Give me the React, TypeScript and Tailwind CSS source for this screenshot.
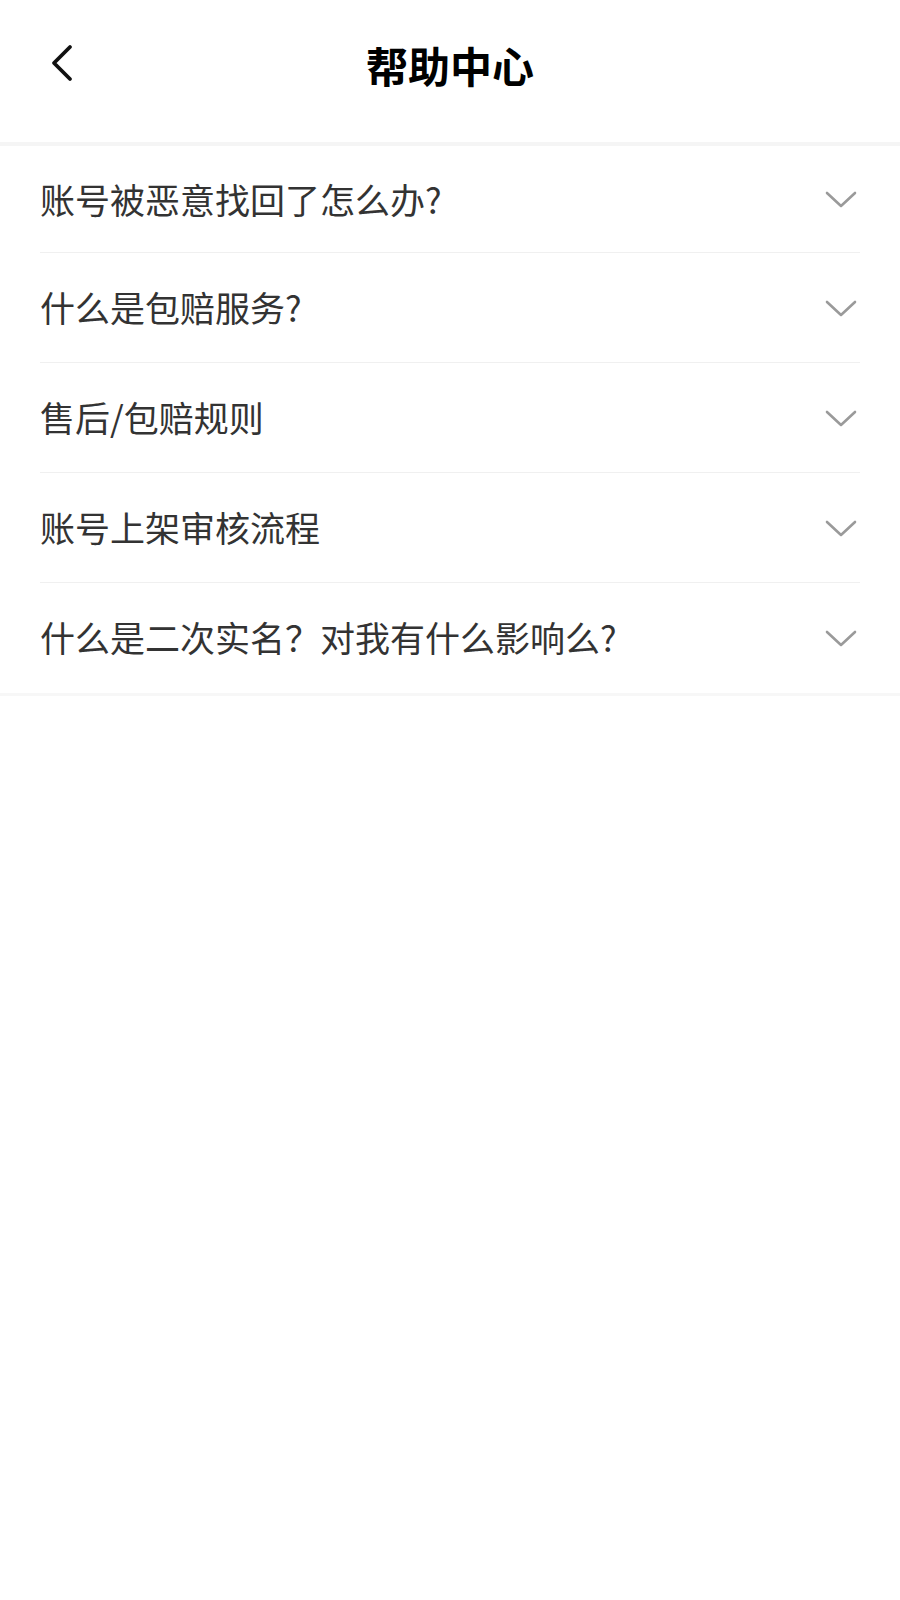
import React from 'react';

const questions = [
  '账号被恶意找回了怎么办?',
  '什么是包赔服务?',
  '售后/包赔规则',
  '账号上架审核流程',
  '什么是二次实名？对我有什么影响么?',
];

const ChevronDown: React.FC = () => (
  <svg width="32" height="18" viewBox="0 0 32 18" fill="none">
    <path d="M2 2 L16 15 L30 2" stroke="#9a9a9a" strokeWidth="2.6" strokeLinecap="round" strokeLinejoin="round" />
  </svg>
);

const App: React.FC = () => {
  return (
    <div
      className="min-h-screen w-full bg-white"
      style={{ fontFamily: '"Noto Sans CJK SC", "Noto Sans", sans-serif' }}
    >
      {/* Header */}
      <div className="relative flex h-[142px] items-center justify-center pb-[13px]">
        <button className="absolute left-[48px] top-[44px] p-0">
          <svg width="28" height="38" viewBox="0 0 28 38" fill="none">
            <path d="M22 3 L6 19 L22 35" stroke="#111" strokeWidth="3.8" strokeLinecap="round" strokeLinejoin="round" />
          </svg>
        </button>
        <h1 className="text-[42px] font-bold leading-none text-black">帮助中心</h1>
      </div>
      <div className="h-[4px] bg-[#f5f5f5]" />

      {/* Question list */}
      <div className="px-10">
        {questions.map((q, i) => (
          <div
            key={i}
            className={`flex items-center justify-between border-b ${i === 0 ? 'h-[107px]' : 'h-[110px]'} ${
              i === questions.length - 1 ? 'border-transparent' : 'border-[#f0f0f0]'
            }`}
          >
            <span className="text-[35px] text-[#333333]">{q}</span>
            <span className="mr-[3px] pt-[2px]">
              <ChevronDown />
            </span>
          </div>
        ))}
      </div>
      <div className="h-[3px] bg-[#f7f7f7]" />
    </div>
  );
};

export default App;
